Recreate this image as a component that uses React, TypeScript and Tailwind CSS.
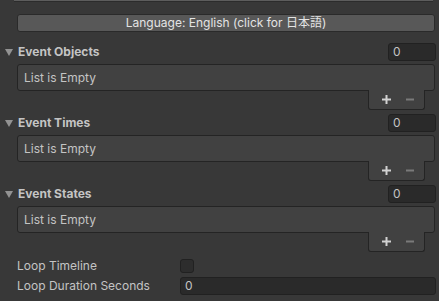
import React from "react";

const font = { fontFamily: "Inter, 'Noto Sans CJK JP', sans-serif" };

const Foldout = () => (
  <svg width="8" height="7" viewBox="0 0 8 7" className="shrink-0">
    <path d="M0 0 L8 0 L4 7 Z" fill="#939393" />
  </svg>
);

const IntField = ({ value, className }: { value: string; className?: string }) => (
  <div
    className={
      "h-[18px] rounded-[3px] border border-[#212121] bg-[#2a2a2a] pl-[4px] text-[12px] leading-[16px] text-[#c4c4c4] " +
      (className ?? "")
    }
  >
    {value}
  </div>
);

const ListSection = ({ title }: { title: string }) => (
  <div className="flex flex-col">
    {/* header */}
    <div className="flex h-[18px] items-center">
      <div className="flex w-[17px] justify-center pl-[1px]">
        <Foldout />
      </div>
      <span className="flex-1 pl-[1px] text-[12px] font-bold text-[#c4c4c4]">{title}</span>
      <IntField value="0" className="mr-[3px] w-[48px]" />
    </div>

    {/* list body */}
    <div className="ml-[17px] mr-[4px] mt-[3px] flex h-[27px] items-center rounded-[3px] border border-[#242424] bg-[#414141] pl-[6px] text-[12px] text-[#c4c4c4]">
      List is Empty
    </div>

    {/* +/- footer */}
    <div className="relative -mt-px ml-[368px] flex h-[20px] w-[57px] items-center rounded-b-[3px] border-x border-b border-[#242424] bg-[#414141]">
      <div className="flex w-[32px] justify-center pl-[2px]">
        <svg width="9" height="9" viewBox="0 0 9 9">
          <rect x="3.5" y="0" width="2" height="9" fill="#d2d2d2" />
          <rect x="0" y="3.5" width="9" height="2" fill="#d2d2d2" />
        </svg>
      </div>
      <div className="flex w-[18px] justify-center">
        <svg width="8" height="9" viewBox="0 0 8 9">
          <rect x="0" y="3.5" width="8" height="2" fill="#7a7a7a" />
        </svg>
      </div>
    </div>
  </div>
);

export default function App() {
  return (
    <div className="flex h-[301px] w-[439px] flex-col overflow-hidden bg-[#383838]" style={font}>
      {/* bottom edge of the element above */}
      <div className="ml-[14px] mr-[6px] h-[2px] border-b border-[#2c2c2c] bg-[#5d5d5d]" />

      {/* language toggle */}
      <button className="ml-[17px] mt-[12px] flex h-[18px] w-[418px] items-center justify-center rounded-[3px] border border-[#2a2a2a] bg-[#585858] text-[12px] text-[#e4e4e4]">
        Language: English (click for 日本語)
      </button>

      <div className="mt-[11px] flex flex-col gap-[4px]">
        <ListSection title="Event Objects" />
        <ListSection title="Event Times" />
        <ListSection title="Event States" />
      </div>

      {/* loop settings */}
      <div className="mt-[6px] flex h-[16px] items-center">
        <span className="w-[180px] pl-[17px] text-[12px] text-[#c4c4c4]">Loop Timeline</span>
        <div className="h-[14px] w-[14px] rounded-[3px] border border-[#212121] bg-[#2d2d2d]" />
      </div>
      <div className="mt-[3px] flex h-[18px] items-center">
        <span className="w-[180px] pl-[17px] text-[12px] text-[#c4c4c4]">Loop Duration Seconds</span>
        <IntField value="0" className="mr-[3px] flex-1" />
      </div>
    </div>
  );
}
